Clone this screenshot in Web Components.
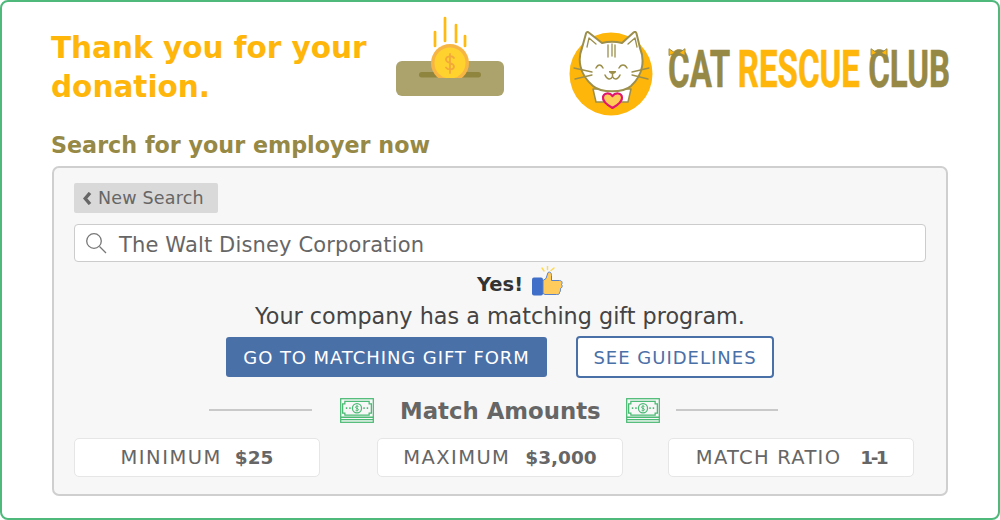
<!DOCTYPE html>
<html><head><meta charset="utf-8"><style>
html,body{margin:0;padding:0;background:#fff}
body{font-family:"DejaVu Sans",Inter,sans-serif;width:1000px;height:520px;overflow:hidden}
</style></head><body>
<donation-card>
  <span slot="title">Thank you for your<br>donation.</span>
  <coin-icon slot="coin"></coin-icon>
  <club-logo slot="logo"></club-logo>
  <span slot="heading">Search for your employer now</span>
  <new-search>New Search</new-search>
  <search-box>The Walt Disney Corporation</search-box>
  <match-result></match-result>
  <div style="display:flex;align-items:center;gap:29px;padding:9px 0 0 152px">
    <action-button kind="solid" ls=".92">GO TO MATCHING GIFT FORM</action-button>
    <action-button kind="outline" ls="1">SEE GUIDELINES</action-button>
  </div>
  <amount-heading>Match Amounts</amount-heading>
  <div style="display:flex;margin-top:8px">
    <amount-card label="MINIMUM" value="$25" gap="13" ls="1.5" vls="0"></amount-card>
    <amount-card label="MAXIMUM" value="$3,000" gap="15" ls="1.4" vls="0" style="margin:0 45px 0 57px"></amount-card>
    <amount-card label="MATCH RATIO" value="1-1" gap="19" ls="1.27" vls="-2.5"></amount-card>
  </div>
</donation-card>
<script>
function def(name,html){customElements.define(name,class extends HTMLElement{connectedCallback(){if(this.shadowRoot)return;const r=this.attachShadow({mode:'open'});r.innerHTML=typeof html==='function'?html(this):html;}});}
const bill=(st)=>`<svg style="${st}" width="34" height="25" viewBox="0 0 35 25.700" fill="none" stroke="#4cba75" stroke-width="1.300"><rect x=".7" y=".7" width="33.600" height="24.300"/><path d="M.7 19.800h33.600M.7 22.300h33.600"/><path d="M5 3.500h25V6h2.300v9.500H30v2H5v-2H2.700V6H5z"/><circle cx="17.500" cy="10.500" r="4.700"/><path d="M19 8.800c-1-.8-3-.6-3 .7 0 1.600 3 .8 3 2.400 0 1.300-2 1.500-3 .7M17.500 7.300v6.400" stroke-width="1"/><path d="M6 10.500h1.500M9.500 10.500h1.500M24 10.500h1.500M27.500 10.500h1.500" stroke-width="1.800"/></svg>`;
def('donation-card',`<style>
:host{display:block;box-sizing:border-box;width:1000px;height:520px;border:2px solid #4fb97c;border-radius:8px;padding:0 50px}
.top{display:flex;align-items:flex-start;height:119px}
.title{flex:none;font-size:29.500px;font-weight:700;line-height:39px;color:#ffb60a;width:345px;padding-top:27px;box-sizing:border-box;white-space:nowrap;margin-left:-1px}
.coin{width:174px;flex:none}
.logo{flex:none}
h2{margin:0 0 0 -1px;font-size:22.250px;font-weight:700;color:#968845;line-height:30px;padding-top:9px}
.panel{box-sizing:border-box;width:896px;height:330px;margin-top:6px;background:#f7f7f7;border:2px solid #cfcfcf;border-radius:7px;padding:15px 20px 0}
</style><div class="top"><div class="title"><slot name="title"></slot></div><div class="coin"><slot name="coin"></slot></div><div class="logo"><slot name="logo"></slot></div></div><h2><slot name="heading"></slot></h2><div class="panel"><slot></slot></div>`);
def('coin-icon',`<style>:host{display:block;padding-top:8px}svg{display:block}</style><svg width="108" height="90" viewBox="0 0 108 90">
<rect x="0" y="51" width="108" height="35" rx="6" fill="#aca26c"/>
<rect x="23" y="62" width="62" height="5.500" rx="2.700" fill="#90853f"/>
<g stroke="#ffbb12" stroke-width="2.700" stroke-linecap="round"><path d="M39 22v14M49 8v23M60 15v17M69 26v10"/></g>
<clipPath id="c"><rect x="20" y="20" width="70" height="48"/></clipPath>
<g clip-path="url(#c)"><circle cx="54" cy="53" r="19" fill="#f7b644"/><circle cx="54" cy="53" r="15.500" fill="#ffd22e"/></g>
<path d="M58 48c-1.500-2.500-8-2.500-8 1.500 0 4.500 8 2.500 8 7 0 4-6.500 3.500-8 1M54 44v19" fill="none" stroke="#f3a93a" stroke-width="1.800" stroke-linecap="round"/>
</svg>`);
def('club-logo',`<style>:host{display:flex;align-items:flex-start;padding-top:29px;margin-left:-1px}
svg{display:block;flex:none}
.wrap{position:relative;margin-left:13px;width:280px;height:60px;flex:none}
.t{position:absolute;left:0;top:13px;font:700 52px/52px Roboto,sans-serif;white-space:nowrap;transform:scaleX(.636);transform-origin:0 0;color:#968845;-webkit-text-stroke:.5px currentColor}
.t b{color:#ffb60a;font-weight:700}
.ear{position:absolute;top:17px}
</style><svg width="86" height="88" viewBox="0 0 86 88">
<circle cx="42" cy="43" r="41.500" fill="#ffb60a"/>
<g fill="#fff" stroke="#9c8f4c" stroke-width="2" stroke-linejoin="round" stroke-linecap="round">
<path d="M24 58l3 13h32l3-13z" stroke-width="1.500"/>
<path d="M13 17L17 2.500c.4-1.500 1.500-2 2.700-1L33 12c6-1.500 14-1.500 20 0L64.500 1.500c1.300-1 2.600-.5 3 1L71 17c4.500 11 4 26-9 38-8 7-30 7-38 0C10 43 8.500 28 13 17z"/>
<path d="M18 16L20 7l7 6M68 16L66 7l-7 6" stroke-width="1.300"/>
<path d="M39 14v12M43 13v12M46 14v12M5 37l18 4M6 48l17-4M63 41l17-4M63 44l16 4" fill="none" stroke-width="1.300"/>
<path d="M27 37c2-4 5-4 7 0M50 37c2-4 6-4 8 0M36 44c2 5 6 5 7.500 1.500C45 49 49 49 51 44M43.500 42v3" fill="none" stroke-width="1.500"/>
</g>
<path d="M40 40h7c.5 2-2 3-3.500 3S39.500 42 40 40z" fill="#9c8f4c"/>
<path d="M43.500 77c-7-4-10-8-9.500-11 .6-4 6.500-5 9.500-1 3-4 9-3 9.500 1 .5 3-2.500 7-9.500 11z" fill="#ffcd55" stroke="#e3166e" stroke-width="2.200" stroke-linejoin="round"/>
</svg><div class="wrap"><div class="t">CAT <b>RESCUE</b> CLUB</div>
<svg class="ear" style="left:0" width="18" height="8" viewBox="0 0 18 8"><path d="M1 7.500V.7l6 4.300zM17 7.500V.7l-6 4.300z" fill="#ffb60a" stroke="#968845" stroke-width=".9"/></svg>
<svg class="ear" style="left:202px" width="18" height="8" viewBox="0 0 18 8"><path d="M1 7.500V.7l6 4.300zM17 7.500V.7l-6 4.300z" fill="#ffb60a" stroke="#968845" stroke-width=".9"/></svg></div>`);
def('new-search',`<style>:host{display:block;box-sizing:border-box;width:144px;height:30px;background:#d9d9d9;border-radius:2px;color:#666;font-size:17.500px;line-height:30px;padding-left:9px;white-space:nowrap;letter-spacing:.2px}
svg{margin-right:6px;vertical-align:-1px}</style><svg width="9" height="13" viewBox="0 0 9 13"><path d="M7 1L2.200 6.500 7 12" fill="none" stroke="#666" stroke-width="3.400"/></svg><slot></slot>`);
def('search-box',`<style>:host{display:flex;align-items:center;box-sizing:border-box;width:852px;height:38px;margin-top:11px;padding-top:1px;background:#fff;border:1px solid #ccc;border-radius:4px;color:#666;font-size:21px;letter-spacing:.15px;white-space:nowrap}
span{padding-top:2px}svg{margin:-1px 12px 0 10px;flex:none}</style><svg width="22" height="22" viewBox="0 0 22 22" fill="none" stroke="#777" stroke-width="1.300"><circle cx="9" cy="9" r="7.300"/><path d="M14.500 14.500L21 21"/></svg><span><slot></slot></span>`);
def('match-result',`<style>:host{display:block;text-align:center;color:#333}
.y{display:flex;justify-content:center;align-items:center;gap:8px;height:44px;padding-left:40px;font-weight:700;font-size:19.500px;box-sizing:border-box;color:#333}
.s{line-height:21px;color:#444;font-size:22.300px}
</style><div class="y"><span>Yes!</span><svg width="32" height="32" viewBox="0 0 32 32" style="margin-top:-4px"><g stroke="#ffd84d" stroke-width="1.400" stroke-linecap="round"><path d="M11 2l2 3M16.500 0v3.500M23 2l-3 2.500"/></g>
<rect x="1" y="11.500" width="11" height="18" rx="2" fill="#3f6fc9"/>
<path d="M12 14.500l3-2 2-6c2-1 3.500 0 3.500 3v5h8c3 0 3 3 2 4 1 1 1 3-1 4 0 2 0 3-1 4 0 2-1 2-3 2H14l-2-1z" fill="#ffcb5c" stroke="#5b81c9" stroke-width="1"/></svg></div>
<div class="s">Your company has a matching gift program.</div>`);
def('action-button',h=>{const s=h.getAttribute('kind')==='solid';return `<style>:host{display:block}
div{box-sizing:border-box;display:flex;align-items:center;justify-content:center;white-space:nowrap;font-size:18px;letter-spacing:${h.getAttribute('ls')}px;border-radius:3px;${s?'width:321px;height:40px;background:#4a70a8;color:#fff':'width:198px;height:42px;background:#fff;color:#4a70a8;border:2px solid #4a70a8;border-radius:4px'}}</style><div><slot></slot></div>`});
def('amount-heading',()=>`<style>:host{display:flex;align-items:center;height:38px;margin-top:14px;padding-left:135px;color:#666;font-size:22.800px;font-weight:700;white-space:nowrap}
i{display:block;width:103px;height:2px;background:#c9c9c9;flex:none;margin-top:-3px}
svg{flex:none}
.t{width:200px;flex:none;text-align:center;margin:0 26px}
</style><i></i>${bill('margin:-1px 0 0 28px')}<span class="t"><slot></slot></span>${bill('margin:-1px 16px 0 0')}<i style="width:102px"></i>`);
def('amount-card',h=>`<style>:host{display:flex;align-items:center;justify-content:center;flex:none;box-sizing:border-box;width:246px;height:39px;background:#fff;border:1px solid #e6e6e6;border-radius:5px;color:#666;font-size:19.500px;white-space:nowrap}
b{margin-left:${h.getAttribute('gap')}px;font-size:18.500px;letter-spacing:${h.getAttribute('vls')}px}span{letter-spacing:${h.getAttribute('ls')}px}</style><span>${h.getAttribute('label')}</span><b>${h.getAttribute('value')}</b>`);
</script>
</body></html>
